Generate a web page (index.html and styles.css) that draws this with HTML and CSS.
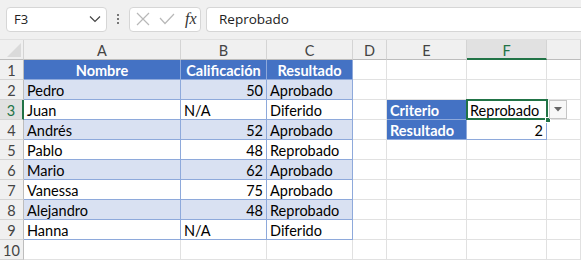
FILE: index.html
```html
<!DOCTYPE html>
<html lang="es">
<head>
    <meta charset="UTF-8">
    <title>Hoja de cálculo</title>
    <link rel="stylesheet" href="styles.css">
</head>
<body>
    <div class="toolbar">
        <div class="namebox">
            <span>F3</span>
            <svg width="12" height="8" viewBox="0 0 12 8"><path d="M1 1.5 L6 6.5 L11 1.5" fill="none" stroke="#444" stroke-width="1.2"/></svg>
        </div>
        <div class="dots"><i></i><i></i><i></i></div>
        <div class="fxbox">
            <svg width="14" height="14" viewBox="0 0 14 14"><path d="M1 1 L13 13 M13 1 L1 13" stroke="#b8b8b8" stroke-width="1.2"/></svg>
            <svg width="16" height="12" viewBox="0 0 16 12"><path d="M1 5 L6 10.5 L15 1" fill="none" stroke="#b8b8b8" stroke-width="1.2"/></svg>
            <span class="fx">fx</span>
        </div>
        <div class="formula">Reprobado</div>
    </div>

    <div class="sheet">
        <div class="corner"><div class="tri"></div></div>
        <div class="colhead">A</div>
        <div class="colhead">B</div>
        <div class="colhead">C</div>
        <div class="colhead">D</div>
        <div class="colhead">E</div>
        <div class="colhead active">F</div>
        <div class="colhead"></div>

        <div class="rowhead">1</div>
        <div class="cell th">Nombre</div>
        <div class="cell th">Calificación</div>
        <div class="cell th">Resultado</div>
        <div class="cell"></div><div class="cell"></div><div class="cell"></div><div class="cell"></div>

        <div class="rowhead">2</div>
        <div class="cell tb band">Pedro</div>
        <div class="cell tb band num">50</div>
        <div class="cell tb band">Aprobado</div>
        <div class="cell"></div><div class="cell"></div><div class="cell"></div><div class="cell"></div>

        <div class="rowhead active">3</div>
        <div class="cell tb">Juan</div>
        <div class="cell tb">N/A</div>
        <div class="cell tb">Diferido</div>
        <div class="cell"></div>
        <div class="cell lbl">Criterio</div>
        <div class="cell tb selected">
            Reprobado
            <div class="sel"><div class="handle"></div></div>
            <div class="drop"><svg width="8" height="5" viewBox="0 0 8 5"><path d="M0 0 H8 L4 4.5 Z" fill="#666"/></svg></div>
        </div>
        <div class="cell"></div>

        <div class="rowhead">4</div>
        <div class="cell tb band">Andrés</div>
        <div class="cell tb band num">52</div>
        <div class="cell tb band">Aprobado</div>
        <div class="cell"></div>
        <div class="cell lbl">Resultado</div>
        <div class="cell tb num">2</div>
        <div class="cell"></div>

        <div class="rowhead">5</div>
        <div class="cell tb">Pablo</div>
        <div class="cell tb num">48</div>
        <div class="cell tb">Reprobado</div>
        <div class="cell"></div><div class="cell"></div><div class="cell"></div><div class="cell"></div>

        <div class="rowhead">6</div>
        <div class="cell tb band">Mario</div>
        <div class="cell tb band num">62</div>
        <div class="cell tb band">Aprobado</div>
        <div class="cell"></div><div class="cell"></div><div class="cell"></div><div class="cell"></div>

        <div class="rowhead">7</div>
        <div class="cell tb">Vanessa</div>
        <div class="cell tb num">75</div>
        <div class="cell tb">Aprobado</div>
        <div class="cell"></div><div class="cell"></div><div class="cell"></div><div class="cell"></div>

        <div class="rowhead">8</div>
        <div class="cell tb band">Alejandro</div>
        <div class="cell tb band num">48</div>
        <div class="cell tb band">Reprobado</div>
        <div class="cell"></div><div class="cell"></div><div class="cell"></div><div class="cell"></div>

        <div class="rowhead">9</div>
        <div class="cell tb">Hanna</div>
        <div class="cell tb">N/A</div>
        <div class="cell tb">Diferido</div>
        <div class="cell"></div><div class="cell"></div><div class="cell"></div><div class="cell"></div>

        <div class="rowhead">10</div>
        <div class="cell"></div><div class="cell"></div><div class="cell"></div><div class="cell"></div><div class="cell"></div><div class="cell"></div><div class="cell"></div>
    </div>
</body>
</html>
```

FILE: styles.css
```css
* {
    box-sizing: border-box;
}
body {
    margin: 0;
    width: 581px;
    height: 260px;
    overflow: hidden;
    background: #fff;
    font-family: Lato, "Open Sans", sans-serif;
    font-size: 14.5px;
    color: #000;
}
.toolbar {
    height: 40px;
    background: #f0f0f0;
    display: flex;
    align-items: center;
    padding: 0 0 1px 6px;
    border-bottom: 1px solid #e0e0e0;
}
.namebox {
    width: 101px;
    height: 25px;
    background: #fff;
    border: 1px solid #d6d6d6;
    border-radius: 4px;
    display: flex;
    align-items: center;
    justify-content: space-between;
    padding: 0 5px 0 7px;
    font-family: "Open Sans", sans-serif;
    font-size: 13px;
    color: #222;
}
.dots {
    width: 22px;
    display: flex;
    flex-direction: column;
    align-items: center;
    gap: 2px;
}
.dots i {
    width: 2px;
    height: 2px;
    background: #777;
}
.fxbox {
    width: 72px;
    height: 25px;
    background: #fff;
    border: 1px solid #d6d6d6;
    border-radius: 4px;
    display: flex;
    align-items: center;
    gap: 9px;
    padding-left: 6px;
}
.fx {
    font-family: "Liberation Serif", serif;
    font-style: italic;
    font-size: 16px;
    color: #333;
    margin-left: 1px;
}
.formula {
    flex: 1;
    height: 25px;
    margin-left: 5px;
    background: #fff;
    border: 1px solid #d6d6d6;
    border-right: none;
    border-radius: 4px 0 0 4px;
    padding-left: 12px;
    display: flex;
    align-items: center;
    font-family: "Open Sans", sans-serif;
    font-size: 13.5px;
    color: #222;
}
.sheet {
    display: grid;
    grid-template-columns: 24px 157px 86px 86px 34px 80px 80px 1fr;
    grid-auto-rows: 20px;
}
.corner {
    background: #f0f0f0;
    border-right: 1px solid #d4d4d4;
    border-bottom: 1px solid #bdbdbd;
    position: relative;
}
.tri {
    position: absolute;
    right: 2px;
    bottom: 2px;
    width: 0;
    height: 0;
    border-left: 14px solid transparent;
    border-bottom: 14px solid #dadada;
}
.colhead {
    background: #f0f0f0;
    border-right: 1px solid #d4d4d4;
    border-bottom: 1px solid #bdbdbd;
    text-align: center;
    line-height: 21px;
    color: #444;
}
.colhead.active {
    background: #e1e1e1;
    color: #217346;
    border-bottom: 2px solid #217346;
}
.rowhead {
    background: #f0f0f0;
    border-right: 1px solid #bdbdbd;
    border-bottom: 1px solid #d4d4d4;
    text-align: center;
    line-height: 22px;
    color: #444;
}
.rowhead.active {
    background: #e1e1e1;
    color: #217346;
    border-right: 2px solid #217346;
}
.cell {
    border-right: 1px solid #e1e1e1;
    border-bottom: 1px solid #e1e1e1;
    line-height: 22px;
    padding: 0 3px;
    white-space: nowrap;
    overflow: visible;
}
.th {
    background: #4472c4;
    color: #fff;
    font-weight: bold;
    text-align: center;
    border-color: #8ea9db;
}
.tb {
    border-color: #8ea9db;
}
.band {
    background: #d9e1f2;
}
.num {
    text-align: right;
}
.lbl {
    background: #4472c4;
    color: #fff;
    font-weight: bold;
    border-color: #8ea9db;
}
.selected {
    position: relative;
}
.sel {
    position: absolute;
    left: -1px;
    top: -1px;
    right: -2px;
    bottom: -1px;
    border: 2px solid #217346;
}
.handle {
    position: absolute;
    right: -5px;
    bottom: -5px;
    width: 6px;
    height: 6px;
    background: #217346;
    border: 1px solid #fff;
}
.drop {
    position: absolute;
    left: 82px;
    top: 0;
    width: 18px;
    height: 19px;
    background: #f8f8f8;
    border: 1px solid #c6c6c6;
    display: flex;
    align-items: center;
    justify-content: center;
}
```
